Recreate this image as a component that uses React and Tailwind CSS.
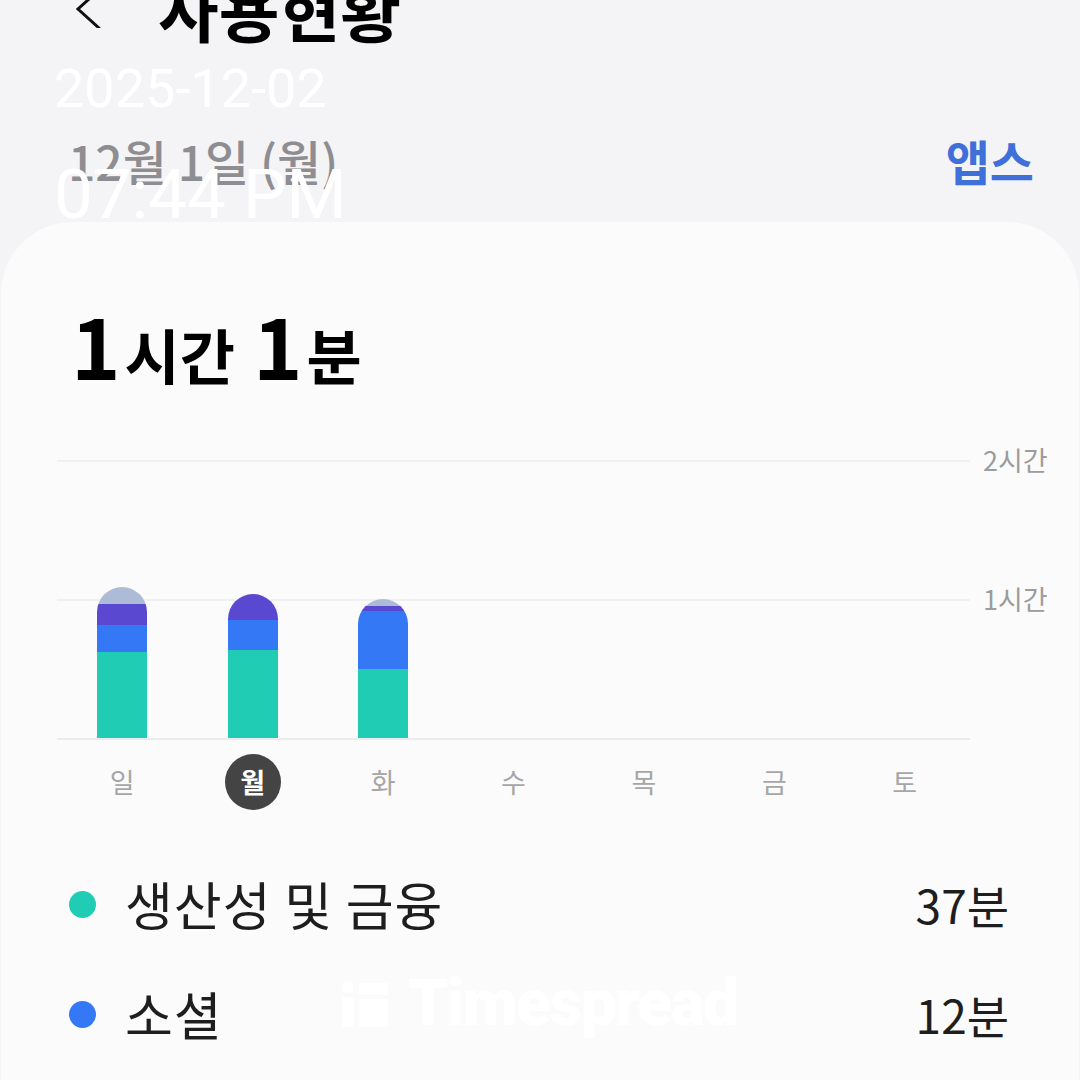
const days = ["일", "월", "화", "수", "목", "금", "토"];

// minutes per category per day: [productivity, social, other(purple), misc(grey)]
const usage = [
  [37, 12, 9, 7],
  [38, 13, 11, 0],
  [30, 25, 2, 3],
  null,
  null,
  null,
  null,
];

const colors = ["#20cdb4", "#3478f6", "#5a48d0", "#adbbd6"];
const PX_PER_MIN = 139 / 60;

function Bar({ data }) {
  if (!data) return <div className="w-[50px]" />;
  return (
    <div className="w-[50px] flex flex-col-reverse rounded-t-[25px] overflow-hidden">
      {data.map((m, i) =>
        m > 0 ? (
          <div key={i} style={{ height: m * PX_PER_MIN, backgroundColor: colors[i] }} />
        ) : null
      )}
    </div>
  );
}

function App() {
  return (
    <div
      className="relative w-[1080px] h-[1080px] overflow-hidden bg-[#f4f4f6]"
      style={{ fontFamily: '"Noto Sans CJK KR", "Noto Sans", sans-serif' }}
    >
      {/* header */}
      <div className="flex items-center h-[80px] -mt-[32px] pl-[72px]">
        <svg width="32" height="40" viewBox="0 0 32 40" className="shrink-0">
          <path d="M27 2 L6 21 L27 40" fill="none" stroke="#111" strokeWidth="3" strokeLinecap="round" />
        </svg>
        <h1 className="ml-[54px] text-[66px] font-bold text-black leading-none whitespace-nowrap">사용현황</h1>
      </div>

      {/* date row */}
      <div className="flex items-center justify-between h-[64px] mt-[80px] pl-[68px] pr-[46px]">
        <span className="text-[48px] text-[#8e8e92] font-medium leading-none whitespace-nowrap">12월 1일 (월)</span>
        <span className="text-[48px] text-[#3f6fd9] font-bold leading-none">앱스</span>
      </div>

      {/* card */}
      <div className="mt-[30px] mx-[1px] rounded-t-[72px] bg-[#fbfbfb] h-[900px] px-[56px]">
        <div className="pt-[80px] pl-[14px] flex items-baseline text-black font-bold leading-none">
          <span className="text-[84px]">1</span>
          <span className="text-[60px] ml-[4px]">시간</span>
          <span className="text-[84px] ml-[18px]">1</span>
          <span className="text-[60px] ml-[4px]">분</span>
        </div>

        {/* chart */}
        <div className="relative mt-[74px] h-[280px]">
          <div className="absolute left-0 w-[913px] top-0 border-t-2 border-[#f0f0f2]" />
          <div className="absolute left-0 w-[913px] top-[139px] border-t-2 border-[#f0f0f2]" />
          <div className="absolute left-0 w-[913px] top-[278px] border-t-2 border-[#ececee]" />
          <span className="absolute left-[926px] -top-[20px] text-[27px] text-[#9c9c9c] whitespace-nowrap">2시간</span>
          <span className="absolute left-[926px] top-[119px] text-[27px] text-[#9c9c9c] whitespace-nowrap">1시간</span>
          <div className="absolute left-0 bottom-[2px] w-[913px] grid grid-cols-7 items-end h-full">
            {usage.map((d, i) => (
              <div key={i} className="flex justify-center items-end h-full">
                <Bar data={d} />
              </div>
            ))}
          </div>
        </div>

        {/* day labels */}
        <div className="w-[913px] grid grid-cols-7 mt-[14px]">
          {days.map((d, i) => (
            <div key={d} className="flex justify-center">
              {i === 1 ? (
                <span className="w-[56px] h-[56px] rounded-full bg-[#444444] text-white text-[27px] font-bold flex items-center justify-center">
                  {d}
                </span>
              ) : (
                <span className="h-[56px] flex items-center text-[27px] text-[#a6a6a6]">{d}</span>
              )}
            </div>
          ))}
        </div>

        {/* legend */}
        <div className="mt-[68px] pl-[12px] pr-[14px] flex flex-col gap-[58px]">
          <div className="flex items-center">
            <span className="w-[27px] h-[27px] rounded-full bg-[#20cdb4]" />
            <span className="ml-[29px] text-[52px] tracking-[1px] text-[#1e1e1e] leading-none">생산성 및 금융</span>
            <span className="ml-auto text-[46px] text-[#1e1e1e] leading-none">37분</span>
          </div>
          <div className="flex items-center">
            <span className="w-[27px] h-[27px] rounded-full bg-[#3478f6]" />
            <span className="ml-[29px] text-[52px] tracking-[1px] text-[#1e1e1e] leading-none">소셜</span>
            <span className="ml-auto text-[46px] text-[#1e1e1e] leading-none">12분</span>
          </div>
        </div>
      </div>

      {/* timestamp overlay */}
      <div
        className="absolute left-[54px] top-[62px] text-white leading-none whitespace-nowrap"
        style={{ fontFamily: "Roboto, sans-serif" }}
      >
        <div className="text-[54px]">2025-12-02</div>
        <div className="text-[69px] mt-[44px]">07:44 PM</div>
      </div>

      {/* watermark */}
      <div
        className="absolute left-[342px] top-[972px] flex items-center gap-[20px] text-white"
        style={{ fontFamily: "Roboto, sans-serif" }}
      >
        <svg width="46" height="46" viewBox="0 0 46 46">
          <circle cx="6" cy="6" r="6" fill="#fff" />
          <rect x="0" y="16" width="12" height="30" fill="#fff" />
          <rect x="17" y="2" width="29" height="12" fill="#fff" />
          <rect x="17" y="18" width="29" height="28" fill="#fff" />
        </svg>
        <span className="text-[64px] font-black leading-none tracking-tight">Timespread</span>
      </div>
    </div>
  );
}

export default App;
